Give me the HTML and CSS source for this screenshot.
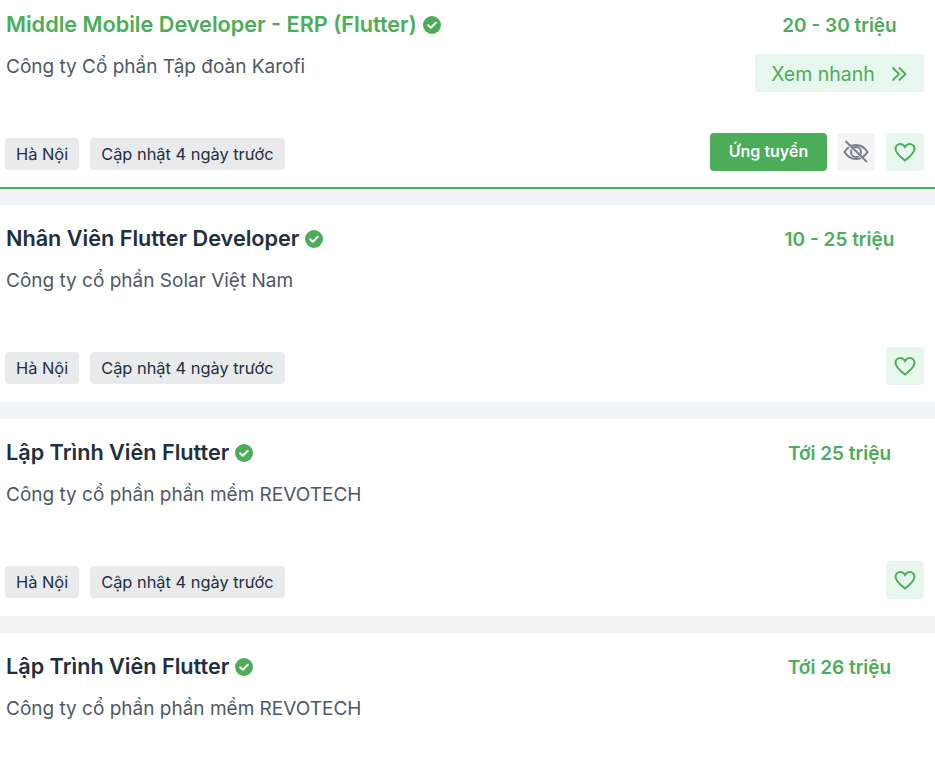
FILE: index.html
```html
<!DOCTYPE html>
<html>
<head>
    <title>Việc làm Flutter</title>
    <link rel="stylesheet" href="styles.css">
</head>
<body>
    <div class="job-list">
        <div class="job-card job-active">
            <div class="job-top">
                <div class="job-info">
                    <h3 class="job-title">Middle Mobile Developer - ERP (Flutter)
                        <svg class="verified" viewBox="0 0 18 18"><circle cx="9" cy="9" r="9"/><path d="M5.2 9.3l2.6 2.5 5-5"/></svg>
                    </h3>
                    <p class="job-company">Công ty Cổ phần Tập đoàn Karofi</p>
                </div>
                <div class="job-side">
                    <div class="job-salary">20 - 30 triệu</div>
                    <button class="quick-view">Xem nhanh
                        <svg viewBox="0 0 18 18"><path d="M2.500 2.500l6.500 6.500-6.500 6.500M9 2.500l6.500 6.500-6.500 6.500"/></svg>
                    </button>
                </div>
            </div>
            <div class="job-bottom">
                <div class="job-tags">
                    <span class="tag">Hà Nội</span>
                    <span class="tag">Cập nhật 4 ngày trước</span>
                </div>
                <div class="job-actions">
                    <button class="apply-button">Ứng tuyển</button>
                    <button class="icon-button hide-button">
                        <svg viewBox="0 0 26 26">
                            <path d="M1.500 13c3-4.700 6.800-7 11.500-7s8.500 2.300 11.500 7c-3 4.700-6.800 7-11.500 7s-8.500-2.300-11.500-7z"/>
                            <path d="M8 13a5 5 0 0 1 10 0 5 5 0 0 1-10 0z"/>
                            <path class="slash-gap" d="M3.500 4.500l19 17.500"/>
                            <path d="M2.500 2l21.500 21"/>
                        </svg>
                    </button>
                    <button class="icon-button like-button">
                        <svg viewBox="0 0 24 24"><path d="M12 20.500C6 16 2.500 12.800 2.500 8.800 2.500 6 4.600 4 7.200 4c2 0 3.700 1 4.800 3 1.100-2 2.800-3 4.800-3 2.600 0 4.700 2 4.700 4.800 0 4-3.500 7.200-9.500 11.700z"/></svg>
                    </button>
                </div>
            </div>
        </div>

        <div class="job-card">
            <div class="job-top">
                <div class="job-info">
                    <h3 class="job-title">Nhân Viên Flutter Developer
                        <svg class="verified" viewBox="0 0 18 18"><circle cx="9" cy="9" r="9"/><path d="M5.2 9.3l2.6 2.5 5-5"/></svg>
                    </h3>
                    <p class="job-company">Công ty cổ phần Solar Việt Nam</p>
                </div>
                <div class="job-side">
                    <div class="job-salary">10 - 25 triệu</div>
                </div>
            </div>
            <div class="job-bottom">
                <div class="job-tags">
                    <span class="tag">Hà Nội</span>
                    <span class="tag">Cập nhật 4 ngày trước</span>
                </div>
                <div class="job-actions">
                    <button class="icon-button like-button">
                        <svg viewBox="0 0 24 24"><path d="M12 20.500C6 16 2.500 12.800 2.500 8.800 2.500 6 4.600 4 7.200 4c2 0 3.700 1 4.800 3 1.100-2 2.800-3 4.800-3 2.600 0 4.700 2 4.700 4.800 0 4-3.500 7.200-9.500 11.700z"/></svg>
                    </button>
                </div>
            </div>
        </div>

        <div class="job-card">
            <div class="job-top">
                <div class="job-info">
                    <h3 class="job-title">Lập Trình Viên Flutter
                        <svg class="verified" viewBox="0 0 18 18"><circle cx="9" cy="9" r="9"/><path d="M5.2 9.3l2.6 2.5 5-5"/></svg>
                    </h3>
                    <p class="job-company">Công ty cổ phần phần mềm REVOTECH</p>
                </div>
                <div class="job-side">
                    <div class="job-salary">Tới 25 triệu</div>
                </div>
            </div>
            <div class="job-bottom">
                <div class="job-tags">
                    <span class="tag">Hà Nội</span>
                    <span class="tag">Cập nhật 4 ngày trước</span>
                </div>
                <div class="job-actions">
                    <button class="icon-button like-button">
                        <svg viewBox="0 0 24 24"><path d="M12 20.500C6 16 2.500 12.800 2.500 8.800 2.500 6 4.600 4 7.200 4c2 0 3.700 1 4.800 3 1.100-2 2.800-3 4.800-3 2.600 0 4.700 2 4.700 4.800 0 4-3.500 7.200-9.500 11.700z"/></svg>
                    </button>
                </div>
            </div>
        </div>

        <div class="job-card job-cut">
            <div class="job-top">
                <div class="job-info">
                    <h3 class="job-title">Lập Trình Viên Flutter
                        <svg class="verified" viewBox="0 0 18 18"><circle cx="9" cy="9" r="9"/><path d="M5.2 9.3l2.6 2.5 5-5"/></svg>
                    </h3>
                    <p class="job-company">Công ty cổ phần phần mềm REVOTECH</p>
                </div>
                <div class="job-side">
                    <div class="job-salary">Tới 26 triệu</div>
                </div>
            </div>
        </div>
    </div>
</body>
</html>
```
FILE: styles.css
```css
html, body {
    height: 768px;
    overflow: hidden;
}

body {
    margin: 0;
    font-family: Inter, "Liberation Sans", sans-serif;
    background-color: #f3f4f6;
}

.job-list {
    display: flex;
    flex-direction: column;
    gap: 17px;
    margin-top: -9px;
}

.job-card {
    display: flex;
    flex-direction: column;
    justify-content: space-between;
    box-sizing: border-box;
    height: 197px;
    padding: 21px 11px 17px 5px;
    background-color: #fff;
}

/* last card is cut by the bottom of the window */
.job-cut {
    height: 135px;
}

.job-active {
    height: 198px;
    margin-bottom: -1px;
    border-bottom: 2px solid #4bad58;
    padding-bottom: 16px;
}

.job-active .job-title {
    color: #4bad58;
}

.job-top {
    display: flex;
    justify-content: space-between;
}

.job-title {
    display: flex;
    align-items: center;
    gap: 6px;
    margin: 0 0 0 1px;
    font-size: 21.65px;
    line-height: 24px;
    font-weight: 600;
    color: #212f3f;
}

.verified {
    width: 18px;
    height: 18px;
    margin-top: 1px;
}

.verified circle {
    fill: #4bad58;
}

.verified path {
    fill: none;
    stroke: #fff;
    stroke-width: 2;
    stroke-linecap: round;
    stroke-linejoin: round;
}

.job-company {
    margin: 19px 0 0 1px;
    font-size: 19px;
    line-height: 24px;
    color: #4d5965;
}

.job-side {
    display: flex;
    flex-direction: column;
    align-items: center;
    gap: 16px;
    width: 169px;
    padding-top: 2px;
}

.job-salary {
    font-size: 19px;
    line-height: 24px;
    font-weight: 600;
    color: #4bad58;
}

.quick-view {
    display: flex;
    align-items: center;
    justify-content: center;
    gap: 15px;
    width: 169px;
    height: 38px;
    padding: 1px 0 0;
    border: none;
    border-radius: 3px;
    background-color: #e8f7ee;
    color: #4bad58;
    font-family: inherit;
    font-size: 19.5px;
}

.quick-view svg {
    width: 18px;
    height: 18px;
    fill: none;
    stroke: #4bad58;
    stroke-width: 1.8;
}

.job-bottom {
    display: flex;
    justify-content: space-between;
    align-items: flex-end;
}

.job-tags {
    display: flex;
    gap: 11px;
    margin-bottom: 1px;
}

.tag {
    padding: 0 11px;
    line-height: 32px;
    border-radius: 4px;
    background-color: #e9eaec;
    color: #212f3f;
    font-size: 16.4px;
}

.job-actions {
    display: flex;
    gap: 11px;
}

.apply-button {
    width: 117px;
    height: 38px;
    margin-right: -1px;
    padding: 0 0 2px;
    border: none;
    border-radius: 4px;
    background-color: #4bad58;
    color: #fff;
    font-family: inherit;
    font-size: 16px;
    font-weight: 600;
}

.icon-button {
    display: flex;
    align-items: center;
    justify-content: center;
    width: 38px;
    height: 38px;
    padding: 0;
    border: none;
    border-radius: 4px;
}

.hide-button {
    background-color: #f3f4f6;
}

.hide-button svg {
    width: 26px;
    height: 26px;
    fill: none;
    stroke: #7a7f85;
    stroke-width: 2;
}

.hide-button .slash-gap {
    stroke: #f3f4f6;
    stroke-width: 2;
}

.like-button {
    background-color: #e8f7ee;
}

.like-button svg {
    width: 24px;
    height: 24px;
    margin-top: -1px;
    fill: none;
    stroke: #4bad58;
    stroke-width: 2;
}
```
